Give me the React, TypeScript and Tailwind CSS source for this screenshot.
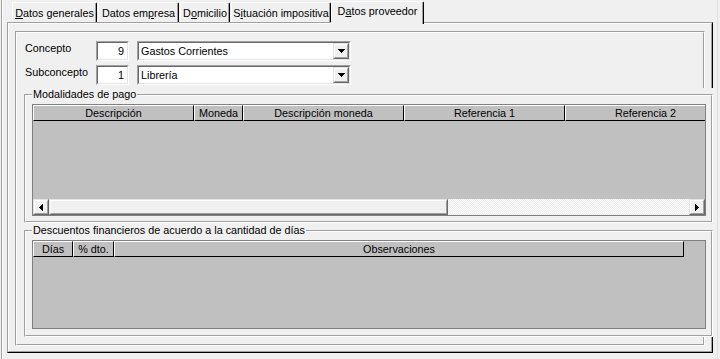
const TABS = [
  { pre: '', key: 'D', post: 'atos generales', w: 'w-[85px] mr-[1px]', active: false },
  { pre: 'Datos em', key: 'p', post: 'resa', w: 'w-[81px] mr-[1px]', active: false },
  { pre: 'D', key: 'o', post: 'micilio', w: 'w-[50px] mr-[1px]', active: false },
  { pre: 'S', key: 'i', post: 'tuación impositiva', w: 'w-[100px]', active: false },
  { pre: 'D', key: 'a', post: 'tos proveedor', w: 'w-[93px]', active: true },
]

const PAGO_COLS = [
  { label: 'Descripción', w: 'w-[161px]' },
  { label: 'Moneda', w: 'w-[49px]' },
  { label: 'Descripción moneda', w: 'w-[161px]' },
  { label: 'Referencia 1', w: 'w-[161px]' },
  { label: 'Referencia 2', w: 'w-[161px]' },
]

const DTO_COLS = [
  { label: 'Días', w: 'w-[40px]' },
  { label: '% dto.', w: 'w-[41px]' },
  { label: 'Observaciones', w: 'w-[570px]' },
]

// classic 3d borders
function Etched({ className = '', children }: { className?: string; children?: React.ReactNode }) {
  return (
    <div className={`border border-t-[#a0a0a0] border-l-[#a0a0a0] border-r-white border-b-white ${className}`}>
      <div className="h-full border border-t-white border-l-white border-r-[#a0a0a0] border-b-[#a0a0a0]">
        {children}
      </div>
    </div>
  )
}

function Sunken({ className = '', children }: { className?: string; children?: React.ReactNode }) {
  return (
    <div className={`border border-t-[#a0a0a0] border-l-[#a0a0a0] border-r-white border-b-white ${className}`}>
      <div className="flex h-full border border-t-[#696969] border-l-[#696969] border-r-[#e3e3e3] border-b-[#e3e3e3] bg-white">
        {children}
      </div>
    </div>
  )
}

function Raised({ className = '', children }: { className?: string; children?: React.ReactNode }) {
  return (
    <div className={`border border-t-[#e3e3e3] border-l-[#e3e3e3] border-r-[#696969] border-b-[#696969] ${className}`}>
      <div className="flex h-full items-center justify-center border border-t-white border-l-white border-r-[#a0a0a0] border-b-[#a0a0a0] bg-[#f0f0f0]">
        {children}
      </div>
    </div>
  )
}

function ArrowDown() {
  return (
    <svg width="7" height="4" viewBox="0 0 7 4" shapeRendering="crispEdges">
      <path d="M0 0h7v1H0z M1 1h5v1H1z M2 2h3v1H2z M3 3h1v1H3z" fill="#000" />
    </svg>
  )
}

function ArrowLeft() {
  return (
    <svg width="4" height="7" viewBox="0 0 4 7" shapeRendering="crispEdges">
      <path d="M0 3h1v1H0z M1 2h1v3H1z M2 1h1v5H2z M3 0h1v7H3z" fill="#000" />
    </svg>
  )
}

function ArrowRight() {
  return (
    <svg width="4" height="7" viewBox="0 0 4 7" shapeRendering="crispEdges">
      <path d="M0 0h1v7H0z M1 1h1v5H1z M2 2h1v3H2z M3 3h1v1H3z" fill="#000" />
    </svg>
  )
}

function Tab({ tab }: { tab: (typeof TABS)[number] }) {
  const base =
    'flex shrink-0 justify-center whitespace-nowrap rounded-tr-[2px] border-t border-l border-r border-t-white border-l-white border-r-black bg-[#f0f0f0] shadow-[inset_-1px_0_0_#a0a0a0]'
  return (
    <div className={`${base} ${tab.w} ${tab.active ? 'relative z-10 mb-[-2px] h-[23px] pt-[3px]' : 'h-[20px] pt-[4px]'}`}>
      <span>
        {tab.pre}
        <span className="underline">{tab.key}</span>
        {tab.post}
      </span>
    </div>
  )
}

function HeaderCell({ label, w }: { label: string; w: string }) {
  return (
    <div
      className={`flex h-[16px] shrink-0 items-center justify-center whitespace-nowrap border border-t-white border-l-white border-r-black border-b-black pt-[1px] ${w}`}
    >
      {label}
    </div>
  )
}

function FieldRow({ label, code, value }: { label: string; code: string; value: string }) {
  return (
    <div className="flex h-[20px]">
      <div className="w-[79px] pl-[8px] pt-[1px]">{label}</div>
      <Sunken className="w-[33px]">
        <div className="flex flex-1 items-center justify-end pr-[3px] pt-[1px]">{code}</div>
      </Sunken>
      <Sunken className="ml-[8px] w-[214px]">
        <div className="flex flex-1 items-center pl-[2px] pt-[1px]">{value}</div>
        <Raised className="w-[16px]">
          <ArrowDown />
        </Raised>
      </Sunken>
    </div>
  )
}

function GroupBox({ title, className, children }: { title: string; className: string; children?: React.ReactNode }) {
  return (
    <div className={`relative ml-[7px] w-[689px] bg-[#f0f0f0] pt-[6px] ${className}`}>
      <Etched className="h-full">{children}</Etched>
      <span className="absolute left-[8px] top-0 whitespace-nowrap bg-[#f0f0f0] px-[1px]">{title}</span>
    </div>
  )
}

export default function App() {
  return (
    <div className="h-[359px] w-[720px] overflow-hidden bg-[#f0f0f0] font-['Liberation_Sans',Arial,sans-serif] text-[10.8px] leading-[13px] text-black">
      <div className="ml-[1px] h-full w-[717px] border-l border-r border-l-[#a0a0a0] border-r-[#e0e0e0]">
        <div className="h-full border-l border-white pl-[4px]">
          <div className="flex w-[706px] flex-col">
            <div className="relative z-10 flex h-[22px] items-end pl-[5px]">
              {TABS.map((t) => (
                <Tab key={t.post} tab={t} />
              ))}
            </div>

            <div className="h-[331px] border border-t-[#a0a0a0] border-l-[#a0a0a0] border-r-black border-b-black">
              <div className="h-full border border-t-white border-l-white border-r-[#a0a0a0] border-b-[#a0a0a0] pl-[6px] pt-[7px]">
                <Etched className="h-[315px] w-[690px]">
                  <div className="flex flex-col gap-[4px] pt-[8px]">
                    <FieldRow label="Concepto" code="9" value="Gastos Corrientes" />
                    <FieldRow label="Subconcepto" code="1" value="Librería" />
                  </div>

                  <GroupBox title="Modalidades de pago" className="mt-[3px] h-[136px] pb-[1px]">
                    <div className="ml-[6px] mt-[8px] flex h-[112px] w-[674px] flex-col overflow-hidden border border-[#808080] bg-[#c0c0c0]">
                      <div className="flex h-[16px] shrink-0">
                        {PAGO_COLS.map((c) => (
                          <HeaderCell key={c.label} label={c.label} w={c.w} />
                        ))}
                      </div>
                      <div className="flex-1" />
                      <div className="flex h-[16px] shrink-0">
                        <Raised className="w-[16px]">
                          <ArrowLeft />
                        </Raised>
                        <Raised className="w-[399px]" />
                        <div className="flex-1 bg-[image:repeating-conic-gradient(#ffffff_0%_25%,#ececec_0%_50%)] bg-[length:2px_2px]" />
                        <Raised className="w-[16px]">
                          <ArrowRight />
                        </Raised>
                      </div>
                    </div>
                  </GroupBox>

                  <GroupBox title="Descuentos financieros de acuerdo a la cantidad de días" className="h-[113px]">
                    <div className="ml-[6px] mt-[8px] flex h-[89px] w-[674px] flex-col overflow-hidden border border-[#808080] bg-[#c0c0c0]">
                      <div className="flex h-[16px] shrink-0">
                        {DTO_COLS.map((c) => (
                          <HeaderCell key={c.label} label={c.label} w={c.w} />
                        ))}
                      </div>
                    </div>
                  </GroupBox>
                </Etched>
              </div>
            </div>
          </div>
        </div>
      </div>
    </div>
  )
}
